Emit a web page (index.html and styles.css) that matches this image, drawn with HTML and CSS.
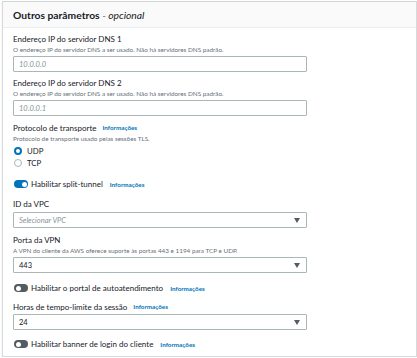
FILE: index.html
```html
<!DOCTYPE html>
<html lang="pt">
<head>
<meta charset="utf-8">
<link rel="stylesheet" href="styles.css">
</head>
<body>
<div class="panel">
  <div class="panel-header">
    <h2 class="title">Outros parâmetros <span class="opt">- opcional</span></h2>
  </div>
  <div class="panel-body">
    <div class="field">
      <div class="label">Endereço IP do servidor DNS 1</div>
      <div class="desc">O endereço IP do servidor DNS a ser usado. Não há servidores DNS padrão.</div>
      <div class="input"><span class="placeholder">10.0.0.0</span></div>
    </div>
    <div class="field f2">
      <div class="label">Endereço IP do servidor DNS 2</div>
      <div class="desc">O endereço IP do servidor DNS a ser usado. Não há servidores DNS padrão.</div>
      <div class="input"><span class="placeholder">10.0.0.1</span></div>
    </div>
    <div class="field f3">
      <div class="label">Protocolo de transporte <span class="info">Informações</span></div>
      <div class="desc">Protocolo de transporte usado pelas sessões TLS.</div>
      <div class="radios">
        <div class="radio-row"><span class="radio checked"></span><span class="rtext">UDP</span></div>
        <div class="radio-row"><span class="radio"></span><span class="rtext">TCP</span></div>
      </div>
    </div>
    <div class="toggle-row t1"><span class="toggle on"></span><span class="ttext">Habilitar split-tunnel</span><span class="info">Informações</span></div>
    <div class="field f4">
      <div class="label">ID da VPC</div>
      <div class="input select"><span class="placeholder">Selecionar VPC</span><span class="caret"></span></div>
    </div>
    <div class="field f5">
      <div class="label">Porta da VPN</div>
      <div class="desc">A VPN do cliente da AWS oferece suporte às portas 443 e 1194 para TCP e UDP.</div>
      <div class="input select"><span class="value">443</span><span class="caret"></span></div>
    </div>
    <div class="toggle-row t2"><span class="toggle"></span><span class="ttext">Habilitar o portal de autoatendimento</span><span class="info">Informações</span></div>
    <div class="field f6">
      <div class="label">Horas de tempo-limite da sessão <span class="info">Informações</span></div>
      <div class="input select"><span class="value">24</span><span class="caret"></span></div>
    </div>
    <div class="toggle-row t3"><span class="toggle"></span><span class="ttext">Habilitar banner de login do cliente</span><span class="info">Informações</span></div>
  </div>
</div>
</body>
</html>
```
FILE: styles.css
```css
* { box-sizing: border-box; }
html, body { margin: 0; padding: 0; background: #fff; }
body {
  font-family: Lato, "Open Sans", sans-serif;
  color: #16191f;
  padding: 1px 1px 0 2px;
}
.panel {
  width: 415px;
  height: 356px;
  border: 1px solid #d5dbdb;
  border-top-color: #d0d4d4;
  background: #fff;
  box-shadow: 0 1px 1px rgba(0,27,43,0.15);
}
.panel-header {
  height: 26px;
  background: #fafafa;
  border-bottom: 1px solid #eaeded;
  padding: 0 10px;
  display: flex;
  align-items: center;
}
.title {
  margin: 0;
  font-size: 10.3px;
  font-weight: 700;
  line-height: 14px;
}
.opt {
  font-weight: 400;
  font-style: italic;
}
.panel-body {
  padding: 5px 10px 0 10px;
}
.field { display: flex; flex-direction: column; }
.label {
  font-size: 8px;
  line-height: 12px;
  height: 12px;
  display: flex;
  align-items: center;
}
.desc {
  font-size: 6.35px;
  line-height: 9px;
  color: #687078;
}
.info {
  color: #0073bb;
  font-weight: 700;
  font-size: 6.3px;
  margin-left: 6px;
}
.input {
  margin-top: 2px;
  width: 294px;
  height: 16px;
  border: 1px solid #aab7b8;
  border-radius: 1px;
  padding: 0 5px;
  display: flex;
  align-items: center;
  font-size: 7.5px;
}
.placeholder {
  color: #879596;
  font-style: italic;
}
.value { color: #16191f; }
.select { justify-content: space-between; }
.caret {
  width: 0;
  height: 0;
  border-left: 3.5px solid transparent;
  border-right: 3.5px solid transparent;
  border-top: 5px solid #545b64;
  margin-right: 1px;
}
.f2 { margin-top: 5px; }
.f3 { margin-top: 6px; }
.radios { margin-top: 2px; display: flex; flex-direction: column; }
.radio-row {
  height: 12px;
  display: flex;
  align-items: center;
  font-size: 7.8px;
}
.radio {
  width: 8px;
  height: 8px;
  border-radius: 50%;
  border: 1px solid #aab7b8;
  margin-left: 1px;
  margin-right: 5px;
  background: #fff;
}
.radio.checked { border: 2.5px solid #0073bb; }
.toggle-row {
  height: 12px;
  display: flex;
  align-items: center;
  font-size: 8px;
}
.toggle-row .info { margin-left: 7px; }
.toggle {
  position: relative;
  width: 14px;
  height: 8px;
  border-radius: 4px;
  background: #545b64;
  margin-left: 1px;
  margin-right: 3px;
}
.toggle::after {
  content: "";
  position: absolute;
  top: 1.5px;
  left: 1.5px;
  width: 5px;
  height: 5px;
  border-radius: 50%;
  background: #fff;
}
.toggle.on { background: #0073bb; }
.toggle.on::after { left: 7.5px; }
.t1 { margin-top: 9px; }
.f4 { margin-top: 8px; }
.f5 { margin-top: 6px; }
.t2 { margin-top: 9px; }
.f6 { margin-top: 7px; }
.f6 .input { margin-top: 1px; }
.t3 { margin-top: 8px; }
```
